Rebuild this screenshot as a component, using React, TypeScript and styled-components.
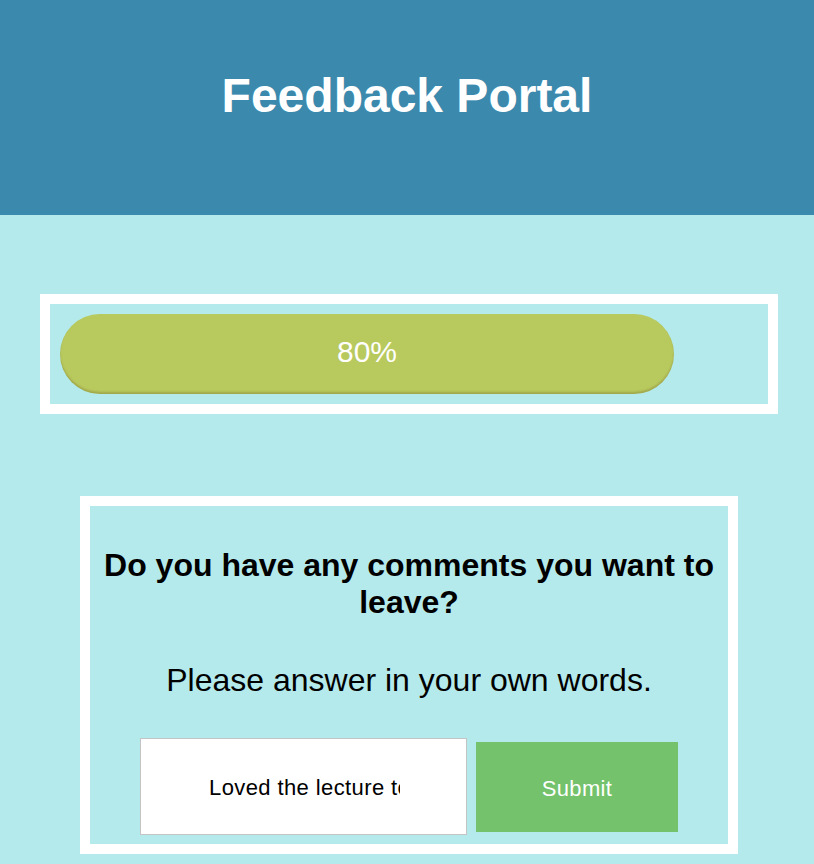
import React from "react";
import styled, { createGlobalStyle } from "styled-components";

const GlobalStyle = createGlobalStyle`
  html, body {
    margin: 0;
    padding: 0;
    background: #b5eaec;
    font-family: "Liberation Sans", Arial, Helvetica, sans-serif;
  }
  * { box-sizing: border-box; }
`;

const Header = styled.header`
  height: 215px;
  background: #3c89ae;
  padding-top: 68px;
  text-align: center;
`;

const Title = styled.h1`
  margin: 0;
  font-size: 48px;
  font-weight: 700;
  color: #ffffff;
  line-height: normal;
`;

const Frame = styled.section<{ $left: number; $width: number; $top: number }>`
  margin-top: ${(p) => p.$top}px;
  margin-left: ${(p) => p.$left}px;
  width: ${(p) => p.$width}px;
  border: 10px solid #ffffff;
`;

const ProgressTrack = styled.div`
  padding: 10px;
`;

const ProgressBar = styled.div`
  height: 80px;
  border-radius: 40px;
  background: #b8c95e;
  box-shadow: inset 0 -2px 2px rgba(120, 110, 40, 0.35);
  color: #ffffff;
  font-size: 30px;
  line-height: 76px;
  text-align: center;
`;

const CommentBody = styled.div`
  padding: 41px 12px 9px;
  text-align: center;
`;

const Question = styled.h2`
  margin: 0;
  font-size: 32px;
  font-weight: 700;
  color: #000;
  line-height: 37px;
`;

const Prompt = styled.p`
  margin: 41px 0 0;
  font-size: 32px;
  color: #000;
  line-height: 37px;
`;

const AnswerRow = styled.form`
  margin-top: 39px;
  display: flex;
  justify-content: center;
  align-items: center;
  gap: 9px;
`;

const AnswerInput = styled.input`
  width: 327px;
  height: 97px;
  margin: 0;
  border: 1px solid #c4c4c4;
  box-shadow: inset 0 0 0 1px #ffffff;
  outline: none;
  background: #ffffff;
  padding: 3px 66px 0 68px;
  font-family: "Liberation Sans", Arial, sans-serif;
  font-size: 22px;
  letter-spacing: 0.4px;
  color: #000;
`;

const SubmitButton = styled.button`
  width: 202px;
  height: 90px;
  margin: 0;
  padding: 5px 0 0;
  border: none;
  background: #74c26b;
  color: #ffffff;
  font-family: "Liberation Sans", Arial, sans-serif;
  font-size: 22px;
  letter-spacing: 0.3px;
  cursor: pointer;
`;

export default function App() {
  const progress = 80;
  return (
    <>
      <GlobalStyle />
      <Header>
        <Title>Feedback Portal</Title>
      </Header>
      <Frame $top={79} $left={40} $width={738}>
        <ProgressTrack>
          <ProgressBar style={{ width: `${(614 / 698) * 100}%` }}>{progress}%</ProgressBar>
        </ProgressTrack>
      </Frame>
      <Frame $top={82} $left={80} $width={658}>
        <CommentBody>
          <Question>Do you have any comments you want to leave?</Question>
          <Prompt>Please answer in your own words.</Prompt>
          <AnswerRow onSubmit={(e) => e.preventDefault()}>
            <AnswerInput type="text" defaultValue="Loved the lecture today, thanks!" />
            <SubmitButton type="submit">Submit</SubmitButton>
          </AnswerRow>
        </CommentBody>
      </Frame>
    </>
  );
}
